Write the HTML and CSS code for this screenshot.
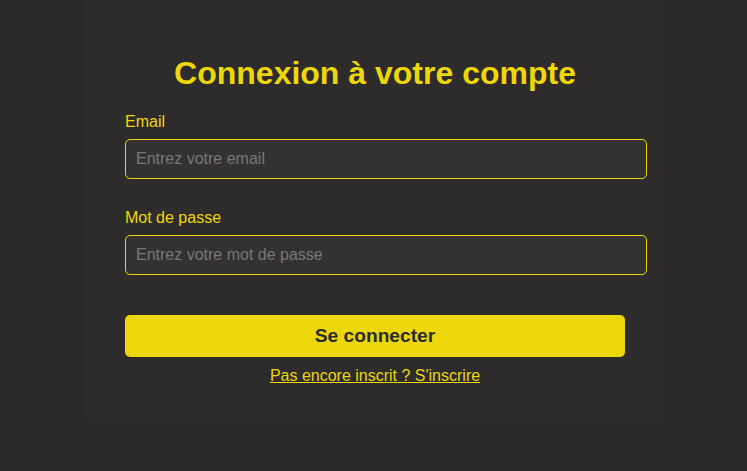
FILE: index.html
```html
<!DOCTYPE html>
<html lang="fr">
<head>
<meta charset="utf-8">
<title>Connexion</title>
<link rel="stylesheet" href="styles.css">
</head>
<body>
<div class="page">
  <div class="card">
    <h1 class="title">Connexion à votre compte</h1>
    <form class="form">
      <div class="group">
        <label class="label" for="email">Email</label>
        <input class="input" id="email" type="email" placeholder="Entrez votre email">
      </div>
      <div class="group">
        <label class="label" for="pwd">Mot de passe</label>
        <input class="input" id="pwd" type="password" placeholder="Entrez votre mot de passe">
      </div>
      <button class="btn" type="button">Se connecter</button>
    </form>
    <p class="register"><a class="link" href="#">Pas encore inscrit ? S'inscrire</a></p>
  </div>
</div>
</body>
</html>
```

FILE: styles.css
```css
html, body {
  margin: 0;
  padding: 0;
  background: #2a2829;
  font-family: "Liberation Sans", Arial, sans-serif;
}

.page {
  display: flex;
  padding-left: 85px;
}

.card {
  width: 500px;
  background: #2d2b2c;
  border-radius: 0 0 10px 10px;
  padding: 55px 40px 39px;
}

.title {
  margin: 0 0 21px;
  font-size: 32px;
  font-weight: bold;
  color: #edd70a;
  text-align: center;
}

.form {
  margin: 0;
}

.group {
  margin-bottom: 30px;
}

.label {
  display: block;
  margin-bottom: 8px;
  font-size: 16px;
  color: #edd70a;
}

.input {
  display: block;
  width: 100%;
  box-sizing: content-box;
  padding: 10px;
  margin: 0;
  font-family: "Liberation Sans", Arial, sans-serif;
  font-size: 16px;
  line-height: 18px;
  color: #ddd;
  background: #333233;
  border: 1px solid #edd70a;
  border-radius: 5px;
  outline: none;
}

.input::placeholder {
  color: #777;
}

.btn {
  display: block;
  width: 100%;
  margin-top: 40px;
  padding: 10px;
  font-family: "Liberation Sans", Arial, sans-serif;
  font-size: 19.2px;
  line-height: 22px;
  font-weight: bold;
  color: #2b2b2b;
  background: #ebd70a;
  border: none;
  border-radius: 5px;
}

.register {
  margin: 10px 0 0;
  text-align: center;
  font-size: 16px;
}

.link {
  color: #edd70a;
  text-decoration: underline;
}
```
